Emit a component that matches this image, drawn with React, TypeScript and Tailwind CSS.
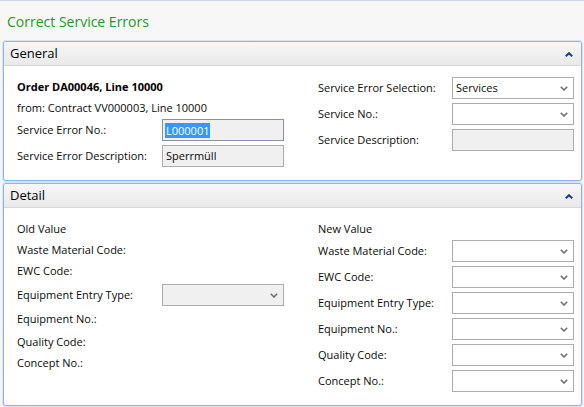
import { ReactNode } from "react";

const font = "font-['Segoe_UI','Open_Sans',sans-serif]";

function DownArrow() {
  return (
    <svg width="8" height="5" viewBox="0 0 8 5" className="shrink-0">
      <path d="M0.8 0.8L4 4L7.2 0.8" fill="none" stroke="#707070" strokeWidth="1.6" />
    </svg>
  );
}

function UpArrow() {
  return (
    <svg width="8" height="5" viewBox="0 0 8 5" className="shrink-0">
      <path d="M0.8 4.3L4 1.2L7.2 4.3" fill="none" stroke="#1c3d8f" strokeWidth="2" />
    </svg>
  );
}

function Box({
  children,
  gray,
  arrow,
}: {
  children?: ReactNode;
  gray?: boolean;
  arrow?: boolean;
}) {
  return (
    <div
      className={`flex h-[22px] w-[122px] shrink-0 items-center justify-between border border-[#acacac] pl-[3px] pr-[5px] ${
        gray ? "bg-[#f0f0f0]" : "bg-white"
      }`}
    >
      <span className="truncate">{children}</span>
      {arrow && <DownArrow />}
    </div>
  );
}

function Row({
  label,
  h = "h-[22px]",
  labelW,
  children,
}: {
  label: string;
  h?: string;
  labelW: string;
  children?: ReactNode;
}) {
  return (
    <div className={`flex items-center ${h}`}>
      <div className={`${labelW} shrink-0`}>{label}</div>
      {children}
    </div>
  );
}

function Panel({
  title,
  children,
  className = "",
}: {
  title: string;
  children: ReactNode;
  className?: string;
}) {
  return (
    <div
      className={`ml-[3px] mr-[2px] overflow-hidden rounded-[3px] border border-[#8fb4ea] bg-white shadow-[0_0_0_1px_#d3e3f8] ${className}`}
    >
      <div className="flex h-[24px] items-center justify-between border-b border-[#d6d6d6] bg-gradient-to-b from-[#f7f7f7] to-[#e9e9e9] pl-[6px] pr-[8px] pt-[1px] text-[13px] text-[#000]">
        <span>{title}</span>
        <UpArrow />
      </div>
      {children}
    </div>
  );
}

const newValueRows = [
  "Waste Material Code:",
  "EWC Code:",
  "Equipment Entry Type:",
  "Equipment No.:",
  "Quality Code:",
  "Concept No.:",
];

export default function App() {
  return (
    <div
      className={`${font} h-[407px] w-[584px] overflow-hidden border-t border-[#cdd8e6] bg-[#f7f7f7] text-[11px] text-[#0a0a0a]`}
    >
      <div className="mb-[9px] pl-[7px] pt-[11px] text-[14px] leading-[20px] text-[#1e9a1e]">
        Correct Service Errors
      </div>

      <Panel title="General">
        <div className="flex pb-[13px] pl-[13px]">
          <div className="flex w-[301px] flex-col pt-[10px]">
            <div className="flex h-[22px] items-center font-bold text-[#000]">
              Order DA00046, Line 10000
            </div>
            <div className="flex h-[21px] items-center">
              from: Contract VV000003, Line 10000
            </div>
            <Row label="Service Error No.:" labelW="w-[145px]">
              <div className="flex h-[22px] w-[122px] items-center border border-[#8b8fa6] bg-[#f0f0f0] pl-[2px]">
                <span className="bg-[#3399ff] px-[1px] leading-[15px] text-white">L000001</span>
              </div>
            </Row>
            <div className="mt-[4px]">
              <Row label="Service Error Description:" labelW="w-[145px]">
                <Box gray>Sperrmüll</Box>
              </Row>
            </div>
          </div>
          <div className="flex flex-col gap-[4px] pt-[11px]">
            <Row label="Service Error Selection:" labelW="w-[134px]">
              <Box arrow>Services</Box>
            </Row>
            <Row label="Service No.:" labelW="w-[134px]">
              <Box arrow />
            </Row>
            <Row label="Service Description:" labelW="w-[134px]">
              <Box gray />
            </Row>
          </div>
        </div>
      </Panel>

      <Panel title="Detail" className="mt-[2px]">
        <div className="flex pb-[13px] pl-[13px] pt-[11px]">
          <div className="flex w-[301px] flex-col">
            <div className="flex h-[21px] items-center">Old Value</div>
            <div className="flex h-[21px] items-center">Waste Material Code:</div>
            <div className="flex h-[21px] items-center">EWC Code:</div>
            <Row label="Equipment Entry Type:" labelW="w-[145px]" h="h-[26px]">
              <Box gray arrow />
            </Row>
            <div className="flex h-[23px] items-center">Equipment No.:</div>
            <div className="flex h-[22px] items-center">Quality Code:</div>
            <div className="flex h-[21px] items-center">Concept No.:</div>
          </div>
          <div className="flex flex-col">
            <div className="flex h-[21px] items-center">New Value</div>
            <div className="flex flex-col gap-[4px]">
              {newValueRows.map((label) => (
                <Row key={label} label={label} labelW="w-[134px]">
                  <Box arrow />
                </Row>
              ))}
            </div>
          </div>
        </div>
      </Panel>
    </div>
  );
}
